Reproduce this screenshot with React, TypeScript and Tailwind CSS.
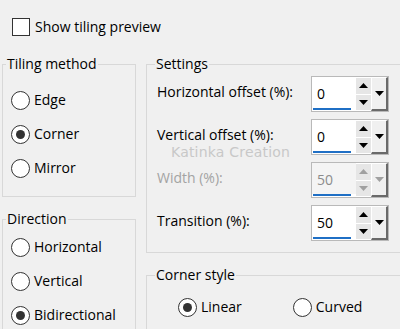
import React from "react";

const Radio = ({ checked, label }: { checked?: boolean; label: string }) => (
  <div className="flex items-center gap-[4px]">
    <span className="flex h-[19px] w-[19px] items-center justify-center rounded-full border border-[#333] bg-white">
      {checked && <span className="h-[9px] w-[9px] rounded-full bg-[#333]" />}
    </span>
    <span>{label}</span>
  </div>
);

const Arrow = ({ up, color }: { up?: boolean; color: string }) => (
  <svg width="9" height="5" viewBox="0 0 9 5">
    <polygon points={up ? "0,5 9,5 4.5,0" : "0,0 9,0 4.5,5"} fill={color} />
  </svg>
);

const Spin = ({ value, disabled }: { value: string; disabled?: boolean }) => {
  const c = disabled ? "#a0a0a0" : "#000";
  return (
    <div className="flex h-[36px] w-[78px] border border-[#b9b9b9] bg-white">
      <div className="flex flex-1 flex-col">
        <div className={`flex flex-1 items-center pl-[5px] pt-[2px] ${disabled ? "text-[#8c8c8c] bg-[#f4f4f4]" : ""}`}>
          {value}
        </div>
        <div className="mb-[1px] ml-[1px] h-[2px] w-[38px] bg-[#1f6fc5]" />
      </div>
      <div className="flex w-[15px] flex-col gap-[1px] bg-white py-[1px]">
        <div className="flex flex-1 items-center justify-center bg-[#e6e6e6]">
          <Arrow up color={c} />
        </div>
        <div className="flex flex-1 items-center justify-center bg-[#e6e6e6]">
          <Arrow color={c} />
        </div>
      </div>
      <div className="flex w-[17px] items-center justify-center border-b-2 border-r-2 border-l border-t border-b-[#6a6a6a] border-r-[#6a6a6a] border-l-white border-t-white bg-[#f0f0f0]">
        <Arrow color={c} />
      </div>
    </div>
  );
};

const Row = ({ label, value, disabled }: { label: string; value: string; disabled?: boolean }) => (
  <div className="flex h-[36px] items-center justify-between">
    <span className={`pb-[4px] ${disabled ? "text-[#a3a3a3]" : ""}`}>{label}</span>
    <Spin value={value} disabled={disabled} />
  </div>
);

export default function App() {
  return (
    <div className="h-[329px] w-[400px] overflow-hidden bg-[#f0f0f0] font-['Open_Sans',sans-serif] text-[14px] leading-[20px] text-black">
      <div className="flex items-center gap-[5px] pl-[12px] pt-[17px]">
        <span className="h-[18px] w-[18px] border border-[#333] bg-white" />
        <span>Show tiling preview</span>
      </div>

      <div className="mt-[17px] flex gap-[10px] pl-[2px]">
        <div className="flex w-[134px] shrink-0 flex-col gap-[12px]">
          <fieldset className="h-[143px] border border-[#d8d8d8]">
            <legend className="ml-[3px] px-[1px]">Tiling method</legend>
            <div className="flex flex-col gap-[14px] pl-[8px] pt-[16px]">
              <Radio label="Edge" />
              <Radio checked label="Corner" />
              <Radio label="Mirror" />
            </div>
          </fieldset>
          <fieldset className="h-[200px] border border-[#d8d8d8]">
            <legend className="ml-[3px] px-[1px]">Direction</legend>
            <div className="flex flex-col gap-[14px] pl-[8px] pt-[8px]">
              <Radio label="Horizontal" />
              <Radio label="Vertical" />
              <Radio checked label="Bidirectional" />
            </div>
          </fieldset>
        </div>

        <div className="flex w-[262px] shrink-0 flex-col gap-[12px]">
          <fieldset className="relative h-[199px] border border-[#d8d8d8]">
            <legend className="ml-[8px] px-[1px]">Settings</legend>
            <div className="flex w-[252px] flex-col gap-[7px] pl-[10px] pr-[10px] pt-[2px]">
              <Row label="Horizontal offset (%):" value="0" />
              <Row label="Vertical offset (%):" value="0" />
              <Row label="Width (%):" value="50" disabled />
              <Row label="Transition (%):" value="50" />
            </div>
            <span className="absolute left-[24px] top-[68px] font-['DejaVu_Sans',sans-serif] text-[14px] tracking-[0.2px] text-[#c8c8c8]">
              Katinka Creation
            </span>
          </fieldset>
          <fieldset className="h-[100px] border border-[#d8d8d8]">
            <legend className="ml-[8px] px-[1px]">Corner style</legend>
            <div className="flex gap-[51px] pl-[31px] pt-[12px]">
              <Radio checked label="Linear" />
              <Radio label="Curved" />
            </div>
          </fieldset>
        </div>
      </div>
    </div>
  );
}
